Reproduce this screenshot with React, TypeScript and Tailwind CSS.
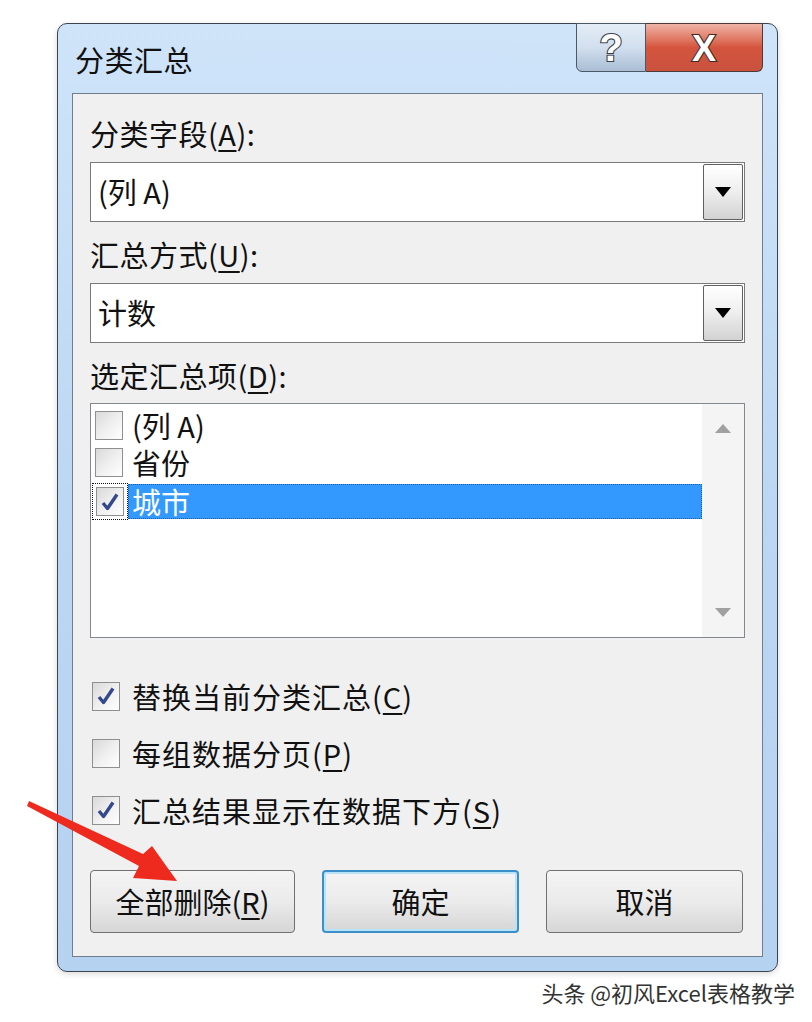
import React from "react";

const font = "font-['Noto_Sans_CJK_SC','Noto_Sans',sans-serif]";

function Box({ checked }: { checked?: boolean }) {
  return (
    <div className="w-[28px] h-[29px] border border-[#8e8f8f] bg-gradient-to-br from-[#d9d9d9] via-[#efefef] to-white flex items-center justify-center shrink-0">
      {checked && (
        <svg width="20" height="20" viewBox="0 0 20 20">
          <path d="M3 11 L7.5 16.5 L17 2.5" fill="none" stroke="#34498b" strokeWidth="3.4" strokeLinejoin="round" />
        </svg>
      )}
    </div>
  );
}

function Combo({ value }: { value: string }) {
  return (
    <div className="h-[60px] w-[655px] border border-[#7a7a7a] bg-white flex items-stretch">
      <div className="flex-1 pl-[7px] flex items-center text-[29px] text-[#111]">{value}</div>
      <div className="w-[40px] my-px mr-px border border-[#606060] rounded-[2px] bg-gradient-to-b from-white via-[#eeeeee] to-[#d2d2d2] flex items-center justify-center">
        <svg width="16" height="10" viewBox="0 0 16 10">
          <path d="M0 0 H16 L8 10 Z" fill="#000" />
        </svg>
      </div>
    </div>
  );
}

function Label({ text, k, mt }: { text: string; k: string; mt: string }) {
  return (
    <div className={`h-[35px] leading-[35px] text-[29px] tracking-[0.5px] text-[#111] ${mt}`}>
      {text}(<u className="underline-offset-4">{k}</u>):
    </div>
  );
}

function Opt({ text, k, checked, mt }: { text: string; k: string; checked?: boolean; mt: string }) {
  return (
    <div className={`h-[34px] flex items-center gap-[12px] pl-[2px] ${mt}`}>
      <Box checked={checked} />
      <span className="block text-[29px] tracking-[1px] text-[#111] leading-[34px]">
        {text}(<u className="underline-offset-4">{k}</u>)
      </span>
    </div>
  );
}

export default function App() {
  return (
    <div className={`relative w-[812px] h-[1022px] bg-white overflow-hidden ${font}`}>
      <div className="pt-[23px] pl-[57px]">
        <div className="w-[721px] h-[949px] rounded-[10px] border border-[#3a4450] bg-gradient-to-b from-[#cfe4f9] via-[#bcd7f3] to-[#b6d2f1] flex flex-col shadow-[0_2px_6px_rgba(0,0,0,0.15)]">
          {/* title bar */}
          <div className="h-[69px] flex items-start justify-between">
            <div className="pl-[17px] pt-[16px] text-[29px] leading-[38px] tracking-[0.5px] text-[#111]">分类汇总</div>
            <div className="flex mr-[14px] -mt-px">
              <div className="w-[70px] h-[49px] rounded-bl-[6px] border border-[#4b5866] bg-gradient-to-b from-[#e4edf7] via-[#d2dfee] to-[#a9bdd4] flex items-center justify-center">
                <svg width="40" height="40" viewBox="0 0 40 40">
                  <text x="20" y="33" textAnchor="middle" fontFamily="Liberation Sans, sans-serif" fontWeight="bold" fontSize="38" fill="#fff" stroke="#3a3f46" strokeWidth="2.2" paintOrder="stroke">?</text>
                </svg>
              </div>
              <div className="w-[117px] h-[49px] rounded-br-[6px] border border-l-0 border-[#4b3a36] bg-gradient-to-b from-[#eeb3a6] via-[#d4543d] to-[#c9523f] flex items-center justify-center">
                <svg width="44" height="40" viewBox="0 0 44 40">
                  <text x="22" y="33" textAnchor="middle" fontFamily="Liberation Sans, sans-serif" fontWeight="bold" fontSize="36" fill="#fff" stroke="#3a2a28" strokeWidth="2.2" paintOrder="stroke">X</text>
                </svg>
              </div>
            </div>
          </div>

          {/* client area */}
          <div className="flex-1 mx-[14px] mb-[14px] border border-[#6f7d8d] bg-[#f0f0f0] pl-[17px] flex flex-col">
            <Label text="分类字段" k="A" mt="mt-[22px]" />
            <div className="mt-[11px]">
              <Combo value="(列 A)" />
            </div>
            <Label text="汇总方式" k="U" mt="mt-[15px]" />
            <div className="mt-[11px]">
              <Combo value="计数" />
            </div>
            <Label text="选定汇总项" k="D" mt="mt-[15px]" />

            {/* list box */}
            <div className="mt-[10px] w-[655px] h-[235px] border border-[#828790] bg-white flex">
              <div className="flex-1 pt-[5px] pl-[4px] flex flex-col gap-[4px]">
                <div className="h-[33px] flex items-center gap-[9px]">
                  <Box />
                  <span className="block h-[33px] text-[29px] leading-[33px] text-[#111]">(列 A)</span>
                </div>
                <div className="h-[33px] flex items-center gap-[9px]">
                  <Box />
                  <span className="block h-[33px] text-[29px] leading-[33px] text-[#111]">省份</span>
                </div>
                <div className="h-[37px] flex items-center">
                  <div className="h-[37px] w-[36px] border border-dotted border-[#111] flex items-center justify-center -ml-[3px]">
                    <Box checked />
                  </div>
                  <div className="flex-1 h-[35px] bg-[#3399ff] border border-dotted border-[#1f5f9f] flex items-center pl-[3px] text-[29px] leading-[33px] text-white">
                    城市
                  </div>
                </div>
              </div>
              <div className="w-[42px] bg-[#f4f4f4] flex flex-col items-center justify-between py-[20px]">
                <svg width="16" height="9" viewBox="0 0 16 9">
                  <path d="M0 9 L8 0 L16 9 Z" fill="#a0a0a0" />
                </svg>
                <svg width="16" height="9" viewBox="0 0 16 9">
                  <path d="M0 0 L16 0 L8 9 Z" fill="#a0a0a0" />
                </svg>
              </div>
            </div>

            <Opt text="替换当前分类汇总" k="C" checked mt="mt-[41px]" />
            <Opt text="每组数据分页" k="P" mt="mt-[23px]" />
            <Opt text="汇总结果显示在数据下方" k="S" checked mt="mt-[23px]" />

            {/* buttons */}
            <div className="mt-[43px] flex gap-[27px]">
              <div className="w-[205px] h-[63px] rounded-[4px] border border-[#707070] bg-gradient-to-b from-[#f4f4f4] via-[#ebebeb] to-[#d6d6d6] flex items-center justify-center text-[29px] text-[#111]">
                全部删除(<u className="underline-offset-4">R</u>)
              </div>
              <div className="w-[197px] h-[63px] rounded-[4px] border-2 border-[#3c8fc8] shadow-[inset_0_0_0_2px_#b9e3f7] bg-gradient-to-b from-[#f4f4f4] via-[#ebebeb] to-[#d6d6d6] flex items-center justify-center text-[29px] text-[#111]">
                确定
              </div>
              <div className="w-[197px] h-[63px] rounded-[4px] border border-[#707070] bg-gradient-to-b from-[#f4f4f4] via-[#ebebeb] to-[#d6d6d6] flex items-center justify-center text-[29px] text-[#111]">
                取消
              </div>
            </div>
          </div>
        </div>
      </div>

      {/* watermark */}
      <div className="flex justify-end pr-[17px] mt-[5px]">
        <span className="text-[22px] leading-[30px] text-[#333] [text-shadow:0_0_2px_#fff,0_0_2px_#fff]">头条 @初风Excel表格教学</span>
      </div>

      {/* annotation arrow */}
      <svg className="absolute left-0 top-0 pointer-events-none" width="812" height="1022" viewBox="0 0 812 1022">
        <polygon points="29,801 143,854 152,846 177,881 133,878 139,866 27,806" fill="#ee2a1e" />
      </svg>
    </div>
  );
}
